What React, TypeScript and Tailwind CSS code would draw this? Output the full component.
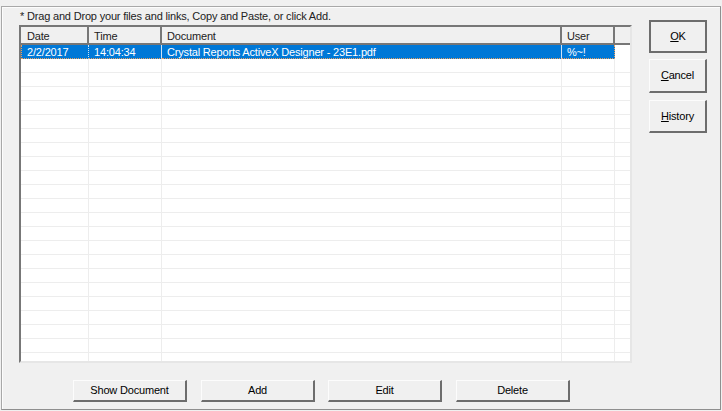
const font = "font-['Liberation_Sans',sans-serif]";

const columns = [
  { label: 'Date', width: 'w-[68px]' },
  { label: 'Time', width: 'w-[73px]' },
  { label: 'Document', width: 'w-[400px]' },
  { label: 'User', width: 'w-[53px]' },
];

const cellWidths = ['w-[68px]', 'w-[73px]', 'w-[400px]', 'w-[53px]', 'w-[17px]'];
const selected = ['2/2/2017', '14:04:34', 'Crystal Reports ActiveX Designer - 23E1.pdf', '%~!'];

const label = 'text-[11px] tracking-[-0.18px]';

function DialogButton({ children, className }: { children: React.ReactNode; className: string }) {
  return (
    <button className={`flex items-center justify-center bg-[#f0f0f0] ${label} text-black border border-t-[#fcfcfc] border-l-[#fcfcfc] border-r-[#6d6d6d] border-b-[#6d6d6d] border-r-2 border-b-2 ${className}`}>
      {children}
    </button>
  );
}

function HeaderCell({ text, width, first }: { text: string; width: string; first: boolean }) {
  return (
    <div className={`${width} h-[18px] shrink-0 ${first ? 'pl-[6px]' : 'pl-[5px]'} leading-[19px] ${label} text-[#222] border-r-2 border-b-2 border-[#777] bg-[#f0f0f0]`}>
      {text}
    </div>
  );
}

function EmptyRow() {
  return (
    <div className="flex h-[14px] shrink-0 border-b border-[#ededed]">
      {cellWidths.map((w, i) => (
        <div key={i} className={`${w} shrink-0 border-r border-[#ededed]`} />
      ))}
    </div>
  );
}

export default function App() {
  return (
    <div className={`w-[722px] h-[411px] overflow-hidden bg-[#f0f0f0] pt-[6px] pl-[1px] pr-[1px] pb-[1px] ${font}`}>
      <div className="flex h-[404px] p-[1px] border border-t-[#a8a8a8] border-l-[#a8a8a8] border-r-[#8f8f8f] border-b-[#8f8f8f] shadow-[inset_1px_1px_0_#fcfcfc]">
        <div className="w-[629px] shrink-0 pl-[16px] flex flex-col">
          <p className={`mt-[1px] h-[16px] pl-[1px] leading-[14px] ${label} text-[#222]`}>
            * Drag and Drop your files and links, Copy and Paste, or click Add.
          </p>
          <div className="w-[613px] h-[338px] flex flex-col overflow-hidden bg-white border-2 border-t-[#777] border-l-[#777] border-r-[#e6e6e6] border-b-[#e6e6e6]">
            <div className="flex shrink-0">
              {columns.map((c, i) => (
                <HeaderCell key={c.label} text={c.label} width={c.width} first={i === 0} />
              ))}
              <div className="w-[17px] h-[18px] shrink-0 border-b-2 border-[#777] bg-[#f0f0f0]" />
            </div>
            <div className="flex h-[14px] shrink-0">
              {selected.map((text, i) => (
                <div
                  key={i}
                  className={`${cellWidths[i]} shrink-0 ${i === 0 ? 'pl-[5px] border-l border-dotted border-l-[#e8a060]' : 'pl-[5px]'} leading-[15px] ${label} text-white bg-[#0078d7] border-b [border-bottom-style:dotted] border-b-[#e8a060] border-r ${i === 3 ? '[border-right-style:dotted] border-r-[#e8a060]' : 'border-r-[#cfe3f5]'} whitespace-nowrap`}
                >
                  {text}
                </div>
              ))}
            </div>
            {Array.from({ length: 22 }).map((_, i) => (
              <EmptyRow key={i} />
            ))}
          </div>
          <div className="flex mt-[17px] pl-[54px]">
            <DialogButton className="w-[114px] h-[22px] mr-[14px]">Show Document</DialogButton>
            <DialogButton className="w-[114px] h-[22px] mr-[13px]">Add</DialogButton>
            <DialogButton className="w-[114px] h-[22px] mr-[14px]">Edit</DialogButton>
            <DialogButton className="w-[114px] h-[22px]">Delete</DialogButton>
          </div>
        </div>
        <div className="flex flex-col pl-[17px] pt-[12px]">
          <DialogButton className="w-[58px] h-[33px] mb-[6px] pb-[1px] border-[#6d6d6d]! border-2">
            <span><u>O</u>K</span>
          </DialogButton>
          <DialogButton className="w-[58px] h-[34px] mb-[7px]">
            <span><u>C</u>ancel</span>
          </DialogButton>
          <DialogButton className="w-[58px] h-[33px]">
            <span><u>H</u>istory</span>
          </DialogButton>
        </div>
      </div>
    </div>
  );
}
